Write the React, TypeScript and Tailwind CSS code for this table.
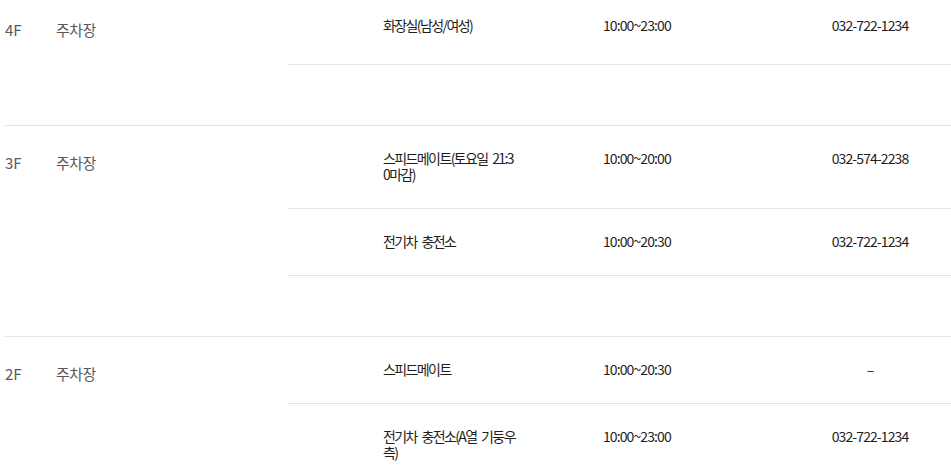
import React from "react";

type Row = { n: string; t: string; p: string };
type Floor = { floor: string; name: string; rows: Row[] };

const floors: Floor[] = [
  {
    floor: "4F",
    name: "주차장",
    rows: [{ n: "화장실(남성/여성)", t: "10:00~23:00", p: "032-722-1234" }],
  },
  {
    floor: "3F",
    name: "주차장",
    rows: [
      { n: "스피드메이트(토요일 21:30마감)", t: "10:00~20:00", p: "032-574-2238" },
      { n: "전기차 충전소", t: "10:00~20:30", p: "032-722-1234" },
    ],
  },
  {
    floor: "2F",
    name: "주차장",
    rows: [
      { n: "스피드메이트", t: "10:00~20:30", p: "–" },
      { n: "전기차 충전소(A열 기둥우측)", t: "10:00~23:00", p: "032-722-1234" },
    ],
  },
];

export default function App() {
  return (
    <div className="w-[951px] h-[472px] overflow-hidden bg-white font-['Noto_Sans_CJK_KR','Noto_Sans',sans-serif]">
      <div className="-mt-[8px] pl-[5px]">
        {floors.map((f, fi) => (
          <section key={f.floor} className="flex border-t border-[#e4e4e4] pb-[60px]">
            <div className="w-[283px] shrink-0 flex pt-[27px] text-[15px] leading-[20px] text-[#5a5a5a]">
              <div className="w-[51px] tracking-[0px]">{f.floor}</div>
              <div className="tracking-[-0.6px]">{f.name}</div>
            </div>
            <div className="flex-1">
              {f.rows.map((r, ri) => (
                <div
                  key={ri}
                  className={
                    "flex border-b border-[#e4e4e4] pt-[24px] text-[14px] leading-[16px] text-[#1e1e1e] " +
                    (fi === 0 && ri === 0 ? "pb-[31px]" : "pb-[26px]")
                  }
                >
                  <div className="ml-[95px] w-[136px] break-all tracking-[-1.6px] [word-spacing:3px]">{r.n}</div>
                  <div className="w-[270px] pl-[84px] tracking-[-0.9px]">{r.t}</div>
                  <div className="flex-1 text-center tracking-[-0.9px]">{r.p}</div>
                </div>
              ))}
            </div>
          </section>
        ))}
      </div>
    </div>
  );
}
